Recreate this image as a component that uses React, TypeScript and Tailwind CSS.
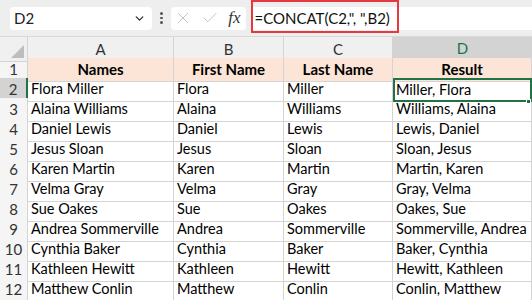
import { ChevronDown, X, Check } from "lucide-react";

const rows = [
  ["Flora Miller", "Flora", "Miller", "Miller, Flora"],
  ["Alaina Williams", "Alaina", "Williams", "Williams, Alaina"],
  ["Daniel Lewis", "Daniel", "Lewis", "Lewis, Daniel"],
  ["Jesus Sloan", "Jesus", "Sloan", "Sloan, Jesus"],
  ["Karen Martin", "Karen", "Martin", "Martin, Karen"],
  ["Velma Gray", "Velma", "Gray", "Gray, Velma"],
  ["Sue Oakes", "Sue", "Oakes", "Oakes, Sue"],
  ["Andrea Sommerville", "Andrea", "Sommerville", "Sommerville, Andrea"],
  ["Cynthia Baker", "Cynthia", "Baker", "Baker, Cynthia"],
  ["Kathleen Hewitt", "Kathleen", "Hewitt", "Hewitt, Kathleen"],
  ["Matthew Conlin", "Matthew", "Conlin", "Conlin, Matthew"],
];

const cols = "grid grid-cols-[28px_146px_110px_109px_139px]";

function FormulaBar() {
  return (
    <div className="flex h-[37px] items-center bg-[#eeeeee] border-b border-[#d9d9d9]">
      <div className="ml-[10px] flex h-[23px] w-[142px] items-center justify-between rounded-[4px] bg-white pl-[4px] pr-[6px] text-[15px] text-[#222]">
        <span>D2</span>
        <ChevronDown size={13} strokeWidth={2.5} className="text-[#333]" />
      </div>
      <div className="mx-[8px] flex flex-col gap-[2px]">
        <span className="h-[2.5px] w-[2.5px] rounded-full bg-[#555]" />
        <span className="h-[2.5px] w-[2.5px] rounded-full bg-[#555]" />
        <span className="h-[2.5px] w-[2.5px] rounded-full bg-[#555]" />
      </div>
      <div className="flex h-[23px] w-[75px] items-center justify-between rounded-[4px] bg-white pl-[3px] pr-[5px]">
        <X size={18} strokeWidth={1.1} className="text-[#b5b5b5]" />
        <Check size={18} strokeWidth={1.1} className="text-[#b5b5b5]" />
        <span className="font-['Liberation_Serif',serif] text-[17px] italic text-[#333]">fx</span>
      </div>
      <div className="relative ml-[5px] flex h-[23px] flex-1 items-center bg-white pl-[4px] text-[15px] text-[#111]">
        <span className="whitespace-nowrap">=CONCAT(C2,", ",B2)</span>
        <div className="absolute left-0 top-[-7px] h-[33px] w-[148px] border-2 border-[#e5393f]" />
      </div>
    </div>
  );
}

export default function App() {
  return (
    <div className="h-[300px] w-[532px] overflow-hidden bg-white font-['Lato','Liberation_Sans',sans-serif]">
      <FormulaBar />
      <div className={`${cols} h-[21px] text-[15px] text-[#333]`}>
        <div className="relative border-b border-r border-[#d4d4d4] bg-[#f0f0f0]">
          <div className="absolute bottom-[3px] right-[3px] h-0 w-0 border-b-[13px] border-l-[13px] border-b-[#bdbdbd] border-l-transparent" />
        </div>
        {["A", "B", "C"].map((c) => (
          <div key={c} className="flex items-center justify-center border-b border-r border-[#d4d4d4] bg-[#f0f0f0]">
            {c}
          </div>
        ))}
        <div className="flex items-center justify-center border-b-2 border-[#217346] bg-[#d3d3d3] text-[#217346]">
          D
        </div>
      </div>
      <div className={`${cols} h-[20px] text-[15px]`}>
        <div className="flex items-center justify-center border-b border-r border-[#d4d4d4] bg-[#f5f5f5] text-[#333]">1</div>
        {["Names", "First Name", "Last Name", "Result"].map((h) => (
          <div key={h} className="flex items-center justify-center whitespace-nowrap border-b border-r border-[#d4d4d4] bg-[#fce4d6] font-bold text-black">
            {h}
          </div>
        ))}
      </div>
      {rows.map((r, i) => {
        const sel = i === 0;
        return (
          <div key={i} className={`${cols} h-[20px] text-[14.5px] text-black`}>
            <div
              className={
                sel
                  ? "flex items-center justify-center border-b border-r-2 border-b-[#d4d4d4] border-r-[#217346] bg-[#d3d3d3] text-[15px] text-[#333]"
                  : "flex items-center justify-center border-b border-r border-[#d4d4d4] bg-[#f5f5f5] text-[15px] text-[#333]"
              }
            >
              {i + 2}
            </div>
            {r.map((v, j) => (
              <div
                key={j}
                className={
                  sel && j === 3
                    ? "relative flex items-center whitespace-nowrap border-2 border-[#217346] pl-[1px] leading-none"
                    : "flex items-center overflow-hidden whitespace-nowrap border-b border-r border-[#d4d4d4] pl-[3px] leading-none"
                }
              >
                {v}
                {sel && j === 3 && (
                  <span className="absolute bottom-[-4px] right-[-1px] h-[5px] w-[5px] border border-white bg-[#217346]" />
                )}
              </div>
            ))}
          </div>
        );
      })}
    </div>
  );
}
